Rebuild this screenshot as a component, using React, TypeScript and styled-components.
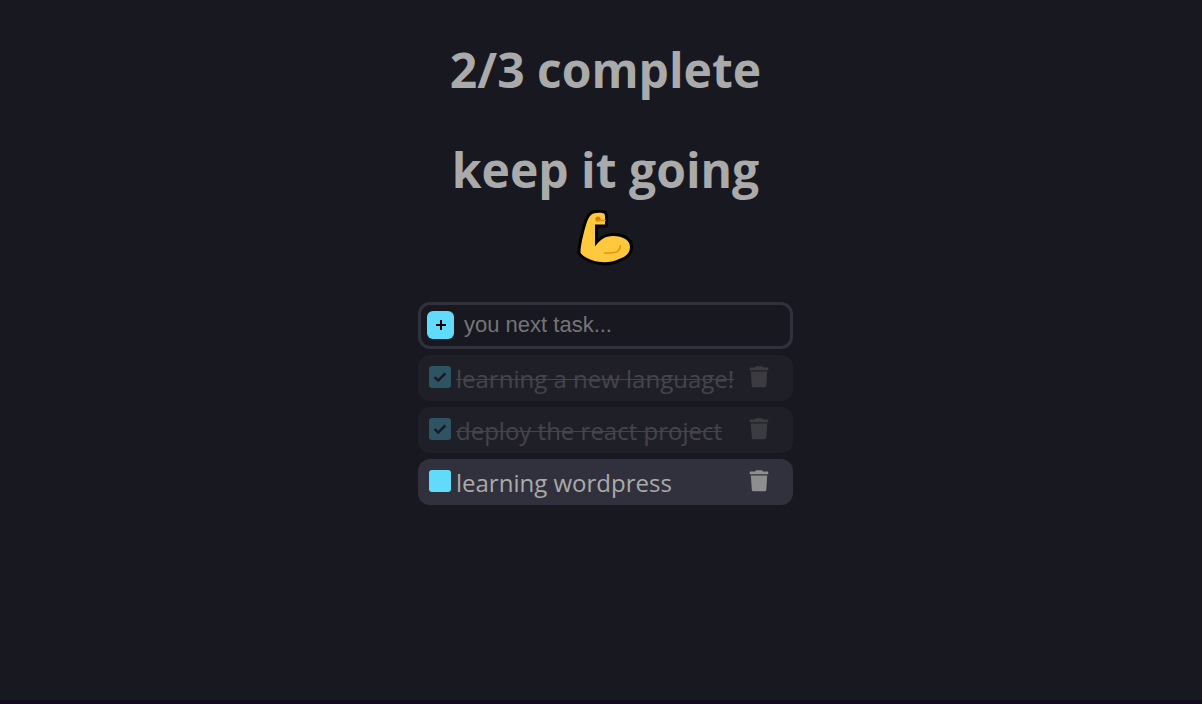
import React, { useState } from "react";
import styled, { createGlobalStyle } from "styled-components";

const GlobalStyle = createGlobalStyle`
  *, *::before, *::after { box-sizing: border-box; }
  body {
    margin: 0;
    background: #181820;
    color: #aaaaaa;
    font-family: "Segoe UI", "Open Sans", "Noto Sans", sans-serif;
  }
`;

const Page = styled.div`
  display: flex;
  flex-direction: column;
  min-height: 100vh;
  border-bottom: 4px solid #120a1e;
`;

const Main = styled.main`
  display: flex;
  flex-direction: column;
  align-items: center;
  padding: 36px 0 32px 9px;
`;

const Heading = styled.h1`
  margin: 0 0 32px;
  font-size: 48px;
  font-weight: 700;
  line-height: 68px;
  text-align: center;
`;

const Cheer = styled(Heading)`
  display: flex;
  flex-direction: column;
  align-items: center;
`;

const Arm = styled.svg`
  display: block;
  width: 60px;
  height: 60px;
  margin: 4px 0 2px;
`;

const Board = styled.section`
  display: flex;
  flex-direction: column;
  gap: 6px;
  width: 375px;
  max-width: 100%;
`;

const EntryForm = styled.form`
  display: flex;
  align-items: center;
  gap: 10px;
  height: 47px;
  padding: 0 6px 2px;
  border: 3px solid #31313d;
  border-radius: 12px;
`;

const AddButton = styled.button`
  display: grid;
  place-items: center;
  flex: none;
  width: 27px;
  height: 28px;
  padding: 0;
  border: 0;
  border-radius: 6px;
  background: #61dafb;
  color: #000000;
  cursor: pointer;
`;

const EntryInput = styled.input`
  flex: 1;
  min-width: 0;
  padding: 0;
  border: 0;
  outline: 0;
  background: transparent;
  color: #aaaaaa;
  font-family: Arial, "Liberation Sans", sans-serif;
  font-size: 22px;
  line-height: 28px;
  &::placeholder { color: #757575; opacity: 1; }
`;

const List = styled.ul`
  display: flex;
  flex-direction: column;
  gap: 6px;
  margin: 0;
  padding: 0;
  list-style: none;
`;

const Row = styled.li<{ $done: boolean }>`
  display: flex;
  align-items: center;
  justify-content: space-between;
  height: 46px;
  padding: 0 24px 2px 11px;
  border-radius: 12px;
  background: #31313d;
  opacity: ${(p) => (p.$done ? 0.3 : 1)};
`;

const TaskLabel = styled.label<{ $done: boolean }>`
  display: flex;
  align-items: center;
  gap: 5px;
  font-size: 24px;
  line-height: 36px;
  white-space: nowrap;
  cursor: pointer;
  span:last-child {
    padding-top: 4px;
    text-decoration: ${(p) => (p.$done ? "line-through 1px" : "none")};
  }
`;

const TickBox = styled.span`
  display: grid;
  place-items: center;
  width: 22px;
  height: 22px;
  > * { grid-area: 1 / 1; }
  svg { pointer-events: none; }
`;

const Tick = styled.input`
  appearance: none;
  width: 22px;
  height: 22px;
  margin: 0;
  border-radius: 3px;
  background: #61dafb;
  cursor: pointer;
`;

const DeleteButton = styled.button`
  display: block;
  padding: 0;
  border: 0;
  background: transparent;
  color: #8e8e8e;
  cursor: pointer;
  svg { display: block; }
`;

const FlexedArm = () => (
  <Arm viewBox="0 0 60 60" role="img" aria-label="flexed biceps">
    <path
      d="M15 7C17 4.500 25 4 28 5.500C29.500 7 29 11 29 16.500H19V38.500C24 32 29 28 37 28C47 28 54 32 54 39C54 46 49 49 43 51C35 55 25 55 17 52.500C12 50.500 6 48 4.500 44.500C4.500 38 7 27 10 17C11.500 12 13 8.500 15 7Z"
      fill="#ffc83d"
      stroke="#000000"
      strokeWidth="6"
      strokeLinejoin="round"
      paintOrder="stroke"
    />
    <circle cx="22" cy="11" r="2.600" fill="#d67d00" />
    <path
      d="M22 12.500H29M28.500 45H34C40 45 44.500 43 44.500 37.500"
      fill="none"
      stroke="#e8960c"
      strokeWidth="1.600"
      strokeLinecap="round"
    />
  </Arm>
);

const PlusIcon = () => (
  <svg width="12" height="12" viewBox="0 0 12 12" aria-hidden="true">
    <path d="M6 1V11M1 6H11" stroke="currentColor" strokeWidth="2" />
  </svg>
);

const CheckIcon = () => (
  <svg width="14" height="14" viewBox="0 0 14 14" aria-hidden="true">
    <path d="M1.500 7L5.200 10.600L12.300 3.400" fill="none" stroke="#181820" strokeWidth="2.400" />
  </svg>
);

const TrashIcon = () => (
  <svg width="20" height="24" viewBox="0 0 20 24" aria-hidden="true">
    <path
      d="M1.500 2.500H6L7 1.200H13L14 2.500H18.500Q19.300 2.500 19.300 3.500V5.200H.7V3.500Q.7 2.500 1.500 2.500ZM1.800 6.400H18.200L17.300 20.800Q17.200 22.300 15.700 22.300H4.300Q2.900 22.300 2.800 20.800Z"
      fill="currentColor"
    />
  </svg>
);

interface Task {
  title: string;
  done: boolean;
}

export default function App() {
  const [tasks, setTasks] = useState<Task[]>([
    { title: "learning a new language!", done: true },
    { title: "deploy the react project", done: true },
    { title: "learning wordpress", done: false },
  ]);
  const [title, setTitle] = useState("");
  const complete = tasks.filter((task) => task.done).length;

  const addTask = (event: React.FormEvent) => {
    event.preventDefault();
    if (!title.trim()) return;
    setTasks([...tasks, { title, done: false }]);
    setTitle("");
  };

  const toggle = (index: number) =>
    setTasks(tasks.map((task, i) => (i === index ? { ...task, done: !task.done } : task)));

  return (
    <Page>
      <GlobalStyle />
      <Main>
        <Heading>{complete}/{tasks.length} complete</Heading>
        <Cheer as="h2">
          keep it going
          <FlexedArm />
        </Cheer>
        <Board>
          <EntryForm onSubmit={addTask}>
            <AddButton type="submit" aria-label="Add task"><PlusIcon /></AddButton>
            <EntryInput
              aria-label="Next task"
              placeholder="you next task..."
              value={title}
              onChange={(event) => setTitle(event.target.value)}
            />
          </EntryForm>
          <List>
            {tasks.map((task, index) => (
              <Row key={index} $done={task.done}>
                <TaskLabel $done={task.done}>
                  <TickBox>
                    <Tick type="checkbox" checked={task.done} onChange={() => toggle(index)} />
                    {task.done && <CheckIcon />}
                  </TickBox>
                  <span>{task.title}</span>
                </TaskLabel>
                <DeleteButton
                  type="button"
                  aria-label={`Delete ${task.title}`}
                  onClick={() => setTasks(tasks.filter((_, i) => i !== index))}
                >
                  <TrashIcon />
                </DeleteButton>
              </Row>
            ))}
          </List>
        </Board>
      </Main>
    </Page>
  );
}
